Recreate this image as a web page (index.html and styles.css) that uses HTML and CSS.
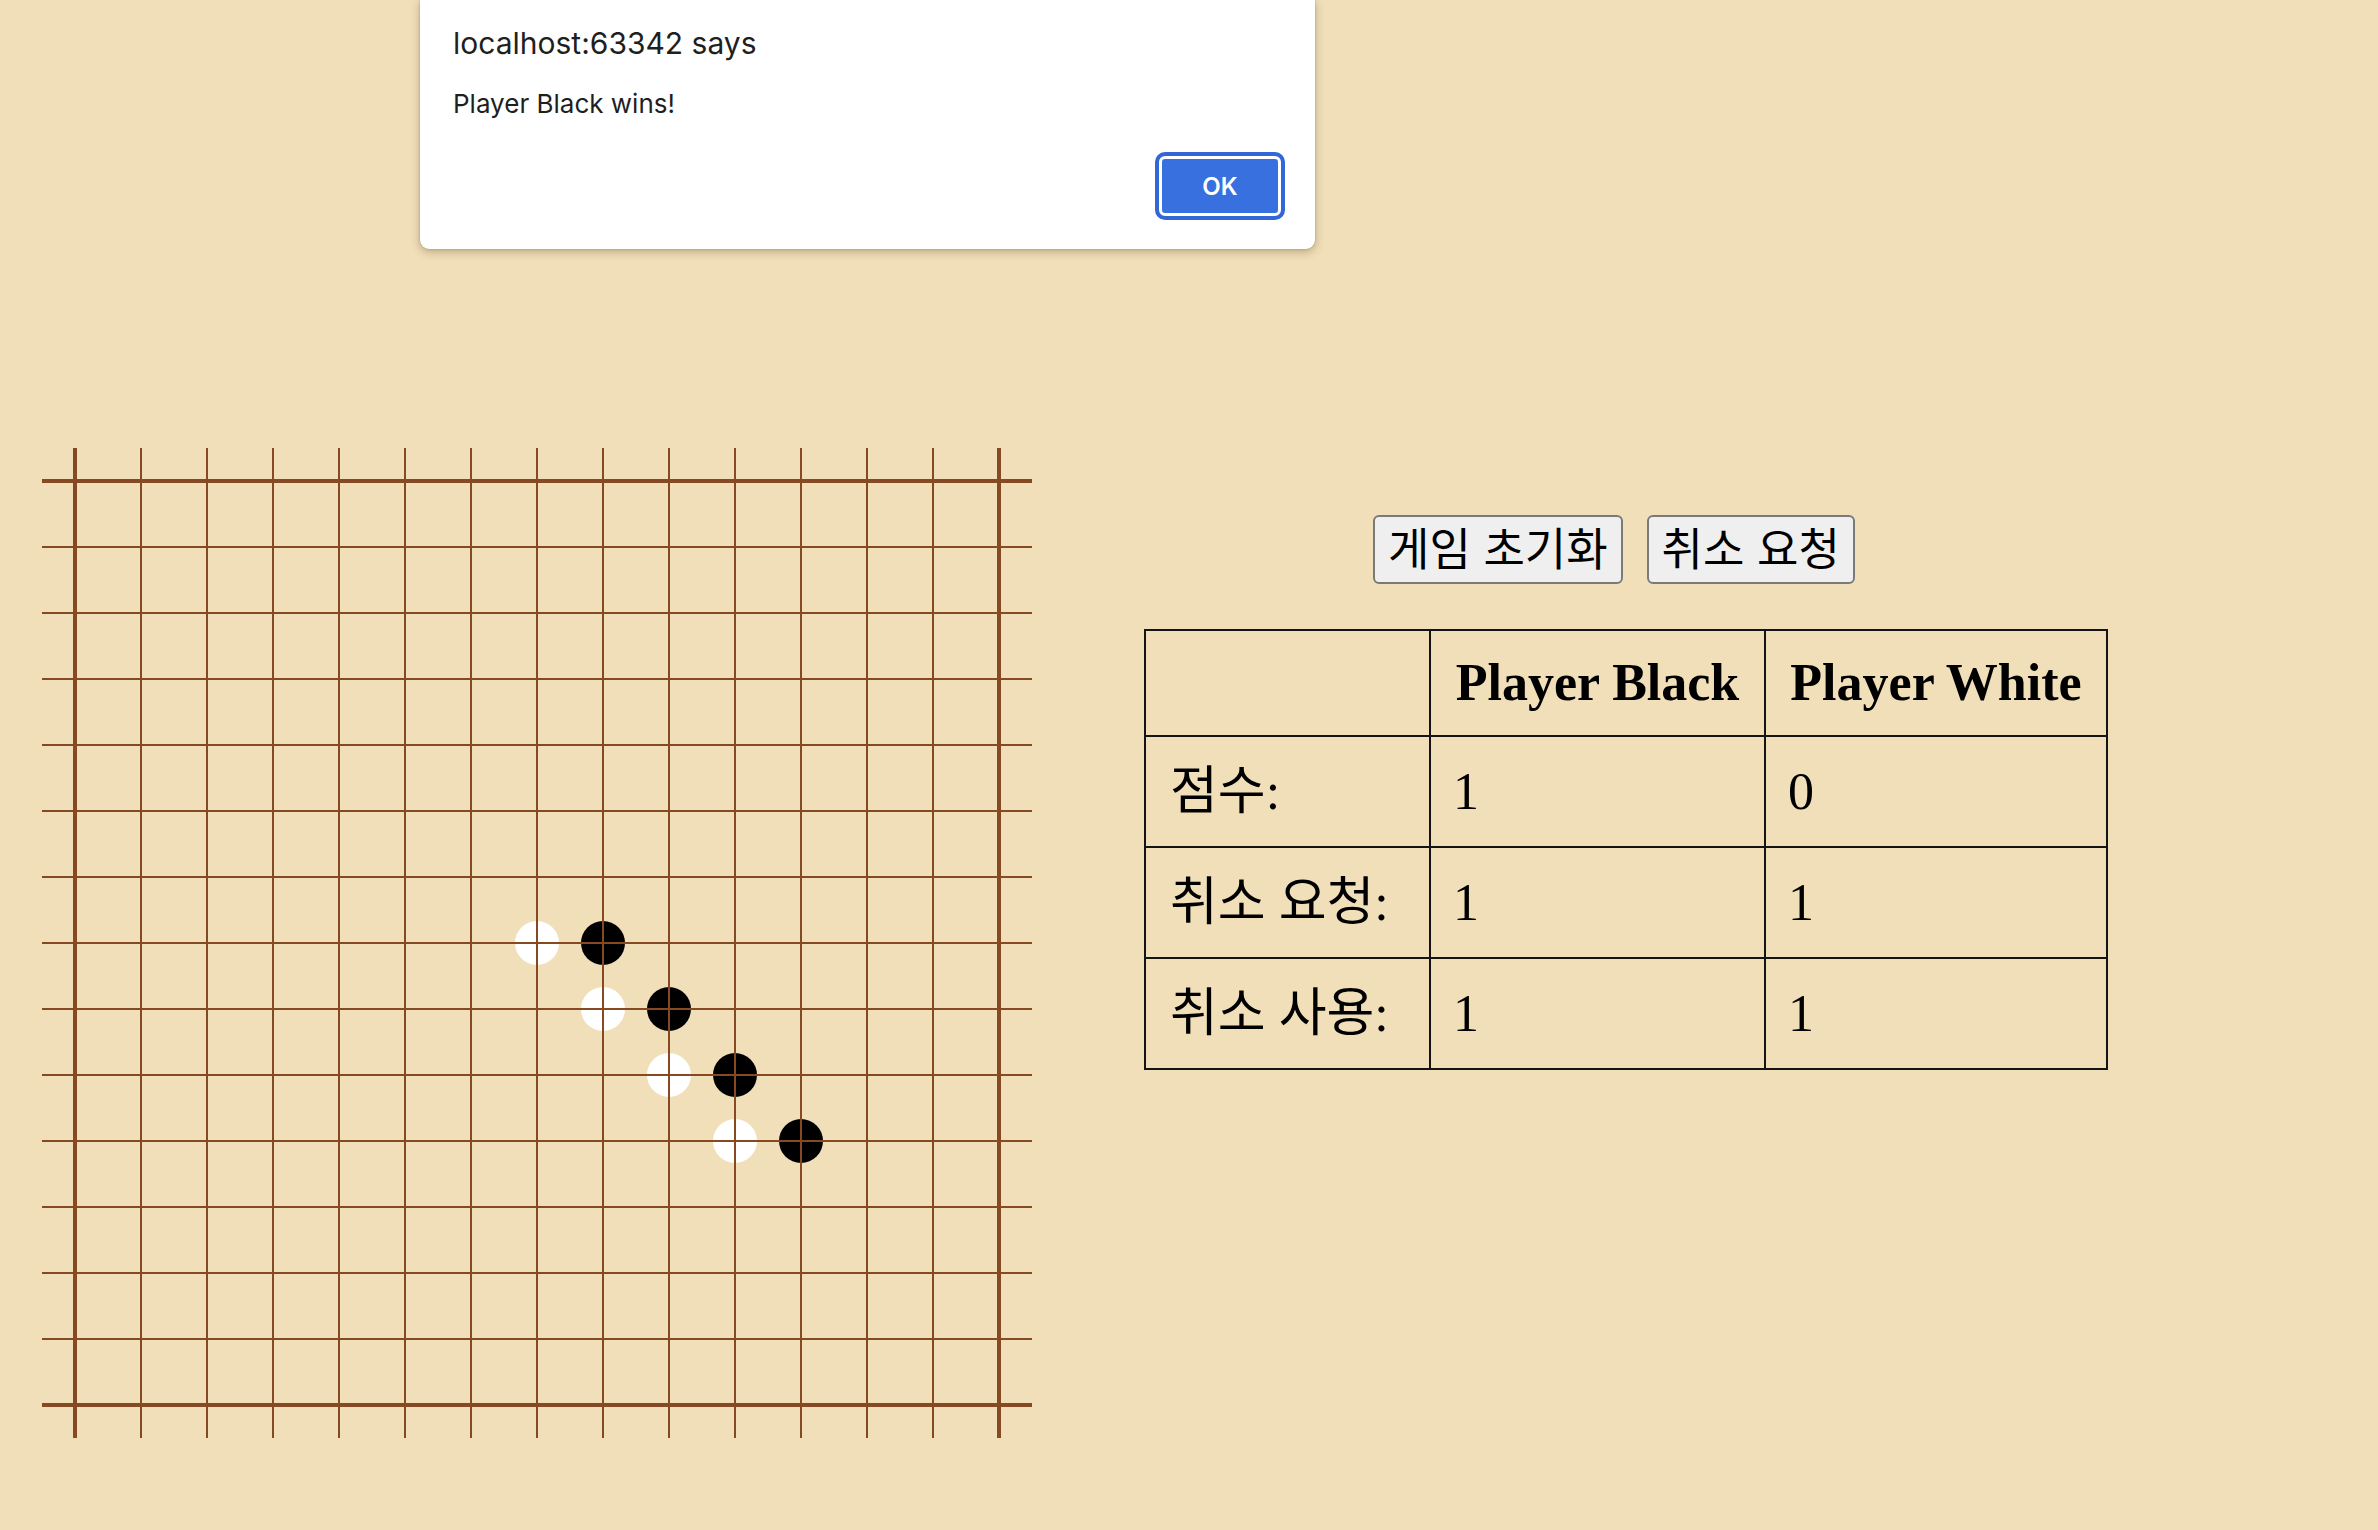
FILE: index.html
```html
<!DOCTYPE html>
<html lang="ko">
<head>
<meta charset="utf-8">
<title>Omok</title>
<link rel="stylesheet" href="styles.css">
</head>
<body>
<div class="page">
  <div class="board">
    <div class="cell"></div><div class="cell"></div><div class="cell"></div><div class="cell"></div><div class="cell"></div><div class="cell"></div><div class="cell"></div><div class="cell"></div><div class="cell"></div><div class="cell"></div><div class="cell"></div><div class="cell"></div><div class="cell"></div><div class="cell"></div><div class="cell"></div>
    <div class="cell"></div><div class="cell"></div><div class="cell"></div><div class="cell"></div><div class="cell"></div><div class="cell"></div><div class="cell"></div><div class="cell"></div><div class="cell"></div><div class="cell"></div><div class="cell"></div><div class="cell"></div><div class="cell"></div><div class="cell"></div><div class="cell"></div>
    <div class="cell"></div><div class="cell"></div><div class="cell"></div><div class="cell"></div><div class="cell"></div><div class="cell"></div><div class="cell"></div><div class="cell"></div><div class="cell"></div><div class="cell"></div><div class="cell"></div><div class="cell"></div><div class="cell"></div><div class="cell"></div><div class="cell"></div>
    <div class="cell"></div><div class="cell"></div><div class="cell"></div><div class="cell"></div><div class="cell"></div><div class="cell"></div><div class="cell"></div><div class="cell"></div><div class="cell"></div><div class="cell"></div><div class="cell"></div><div class="cell"></div><div class="cell"></div><div class="cell"></div><div class="cell"></div>
    <div class="cell"></div><div class="cell"></div><div class="cell"></div><div class="cell"></div><div class="cell"></div><div class="cell"></div><div class="cell"></div><div class="cell"></div><div class="cell"></div><div class="cell"></div><div class="cell"></div><div class="cell"></div><div class="cell"></div><div class="cell"></div><div class="cell"></div>
    <div class="cell"></div><div class="cell"></div><div class="cell"></div><div class="cell"></div><div class="cell"></div><div class="cell"></div><div class="cell"></div><div class="cell"></div><div class="cell"></div><div class="cell"></div><div class="cell"></div><div class="cell"></div><div class="cell"></div><div class="cell"></div><div class="cell"></div>
    <div class="cell"></div><div class="cell"></div><div class="cell"></div><div class="cell"></div><div class="cell"></div><div class="cell"></div><div class="cell"></div><div class="cell"></div><div class="cell"></div><div class="cell"></div><div class="cell"></div><div class="cell"></div><div class="cell"></div><div class="cell"></div><div class="cell"></div>
    <div class="cell"></div><div class="cell"></div><div class="cell"></div><div class="cell"></div><div class="cell"></div><div class="cell"></div><div class="cell"></div><div class="cell"><span class="stone white"></span></div><div class="cell"><span class="stone black"></span></div><div class="cell"></div><div class="cell"></div><div class="cell"></div><div class="cell"></div><div class="cell"></div><div class="cell"></div>
    <div class="cell"></div><div class="cell"></div><div class="cell"></div><div class="cell"></div><div class="cell"></div><div class="cell"></div><div class="cell"></div><div class="cell"></div><div class="cell"><span class="stone white"></span></div><div class="cell"><span class="stone black"></span></div><div class="cell"></div><div class="cell"></div><div class="cell"></div><div class="cell"></div><div class="cell"></div>
    <div class="cell"></div><div class="cell"></div><div class="cell"></div><div class="cell"></div><div class="cell"></div><div class="cell"></div><div class="cell"></div><div class="cell"></div><div class="cell"></div><div class="cell"><span class="stone white"></span></div><div class="cell"><span class="stone black"></span></div><div class="cell"></div><div class="cell"></div><div class="cell"></div><div class="cell"></div>
    <div class="cell"></div><div class="cell"></div><div class="cell"></div><div class="cell"></div><div class="cell"></div><div class="cell"></div><div class="cell"></div><div class="cell"></div><div class="cell"></div><div class="cell"></div><div class="cell"><span class="stone white"></span></div><div class="cell"><span class="stone black"></span></div><div class="cell"></div><div class="cell"></div><div class="cell"></div>
    <div class="cell"></div><div class="cell"></div><div class="cell"></div><div class="cell"></div><div class="cell"></div><div class="cell"></div><div class="cell"></div><div class="cell"></div><div class="cell"></div><div class="cell"></div><div class="cell"></div><div class="cell"></div><div class="cell"></div><div class="cell"></div><div class="cell"></div>
    <div class="cell"></div><div class="cell"></div><div class="cell"></div><div class="cell"></div><div class="cell"></div><div class="cell"></div><div class="cell"></div><div class="cell"></div><div class="cell"></div><div class="cell"></div><div class="cell"></div><div class="cell"></div><div class="cell"></div><div class="cell"></div><div class="cell"></div>
    <div class="cell"></div><div class="cell"></div><div class="cell"></div><div class="cell"></div><div class="cell"></div><div class="cell"></div><div class="cell"></div><div class="cell"></div><div class="cell"></div><div class="cell"></div><div class="cell"></div><div class="cell"></div><div class="cell"></div><div class="cell"></div><div class="cell"></div>
    <div class="cell"></div><div class="cell"></div><div class="cell"></div><div class="cell"></div><div class="cell"></div><div class="cell"></div><div class="cell"></div><div class="cell"></div><div class="cell"></div><div class="cell"></div><div class="cell"></div><div class="cell"></div><div class="cell"></div><div class="cell"></div><div class="cell"></div>
  </div>

  <div class="panel">
    <div class="controls">
      <button class="btn">게임 초기화</button>
      <button class="btn">취소 요청</button>
    </div>
    <table class="score">
      <colgroup>
        <col class="col-label">
        <col class="col-black">
        <col class="col-white">
      </colgroup>
      <tr class="head-row">
        <th></th>
        <th>Player Black</th>
        <th>Player White</th>
      </tr>
      <tr>
        <td>점수:</td>
        <td>1</td>
        <td>0</td>
      </tr>
      <tr>
        <td>취소 요청:</td>
        <td>1</td>
        <td>1</td>
      </tr>
      <tr>
        <td>취소 사용:</td>
        <td>1</td>
        <td>1</td>
      </tr>
    </table>
  </div>
</div>

<div class="dialog">
  <div class="dialog-title">localhost:63342 says</div>
  <div class="dialog-msg">Player Black wins!</div>
  <div class="dialog-actions">
    <button class="ok-btn">OK</button>
  </div>
</div>
</body>
</html>
```

FILE: styles.css
```css
html, body {
  margin: 0;
  padding: 0;
}

body {
  background: #f1dfb9;
  font-family: "Liberation Serif", "Noto Sans CJK KR", serif;
  width: 2378px;
  height: 1530px;
  overflow: hidden;
  position: relative;
}

.page {
  display: flex;
  align-items: flex-start;
  gap: 112px;
  padding: 448px 0 0 42px;
}

/* ---------- board ---------- */
.board {
  display: grid;
  grid-template-columns: repeat(15, 66px);
  grid-template-rows: repeat(15, 66px);
  flex: none;
}

.cell {
  position: relative;
}

.cell::before,
.cell::after {
  content: "";
  position: absolute;
  background: #854a22;
  z-index: 1;
}

/* horizontal line */
.cell::before {
  left: 0;
  right: 0;
  top: 32px;
  height: 2px;
}

/* vertical line */
.cell::after {
  top: 0;
  bottom: 0;
  left: 32px;
  width: 2px;
}

/* outer lines are thicker */
.cell:nth-child(-n+15)::before,
.cell:nth-child(n+211)::before {
  top: 31px;
  height: 4px;
}

.cell:nth-child(15n+1)::after,
.cell:nth-child(15n)::after {
  left: 31px;
  width: 4px;
}

.stone {
  position: absolute;
  left: 11px;
  top: 11px;
  width: 44px;
  height: 44px;
  border-radius: 50%;
  z-index: 0;
}

.stone.black {
  background: #000;
}

.stone.white {
  background: #fff;
}

/* ---------- right panel ---------- */
.panel {
  display: flex;
  flex-direction: column;
  align-items: flex-start;
  padding-top: 67px;
}

.controls {
  display: flex;
  gap: 24px;
  margin-left: 229px;
}

.btn {
  font-family: "Noto Sans CJK KR", sans-serif;
  font-size: 45px;
  line-height: 1;
  height: 69px;
  padding: 0 13px 6px;
  border: 2px solid #7a7a7a;
  border-radius: 6px;
  background: #efefef;
  color: #000;
}

.score {
  margin-top: 45px;
  border-collapse: collapse;
  table-layout: fixed;
  width: 962px;
  font-size: 52px;
  color: #000;
}

.col-label { width: 285px; }
.col-black { width: 335px; }
.col-white { width: 342px; }

.score th,
.score td {
  border: 2px solid #141414;
  padding: 0 22px;
  height: 109px;
  line-height: 60px;
  white-space: nowrap;
}

.score .head-row th {
  height: 104px;
  font-weight: bold;
  text-align: center;
}

.score td {
  text-align: left;
}

.score td:first-child {
  padding-left: 24px;
  padding-right: 0;
}

/* ---------- alert dialog ---------- */
.dialog {
  position: absolute;
  left: 420px;
  top: 0;
  width: 895px;
  height: 249px;
  box-sizing: border-box;
  background: #fff;
  border-radius: 0 0 9px 9px;
  box-shadow: 0 3px 10px rgba(90, 70, 30, 0.35), 0 0 2px rgba(90, 70, 30, 0.4);
  padding: 24px 30px 29px 33px;
  display: flex;
  flex-direction: column;
  font-family: "Inter", "Roboto", sans-serif;
  color: #1f1f1f;
}

.dialog-title {
  font-size: 30px;
  line-height: 38px;
}

.dialog-msg {
  font-size: 26px;
  line-height: 32px;
  margin-top: 26px;
}

.dialog-actions {
  margin-top: auto;
  display: flex;
  justify-content: flex-end;
}

.ok-btn {
  width: 122px;
  height: 60px;
  box-sizing: border-box;
  background: #3871df;
  border: 3px solid #fff;
  outline: 4px solid #3366d6;
  outline-offset: 0;
  border-radius: 6px;
  color: #fff;
  font-family: "Inter", "Roboto", sans-serif;
  font-size: 24px;
  font-weight: 600;
  padding: 0;
  margin: 4px;
}
```
